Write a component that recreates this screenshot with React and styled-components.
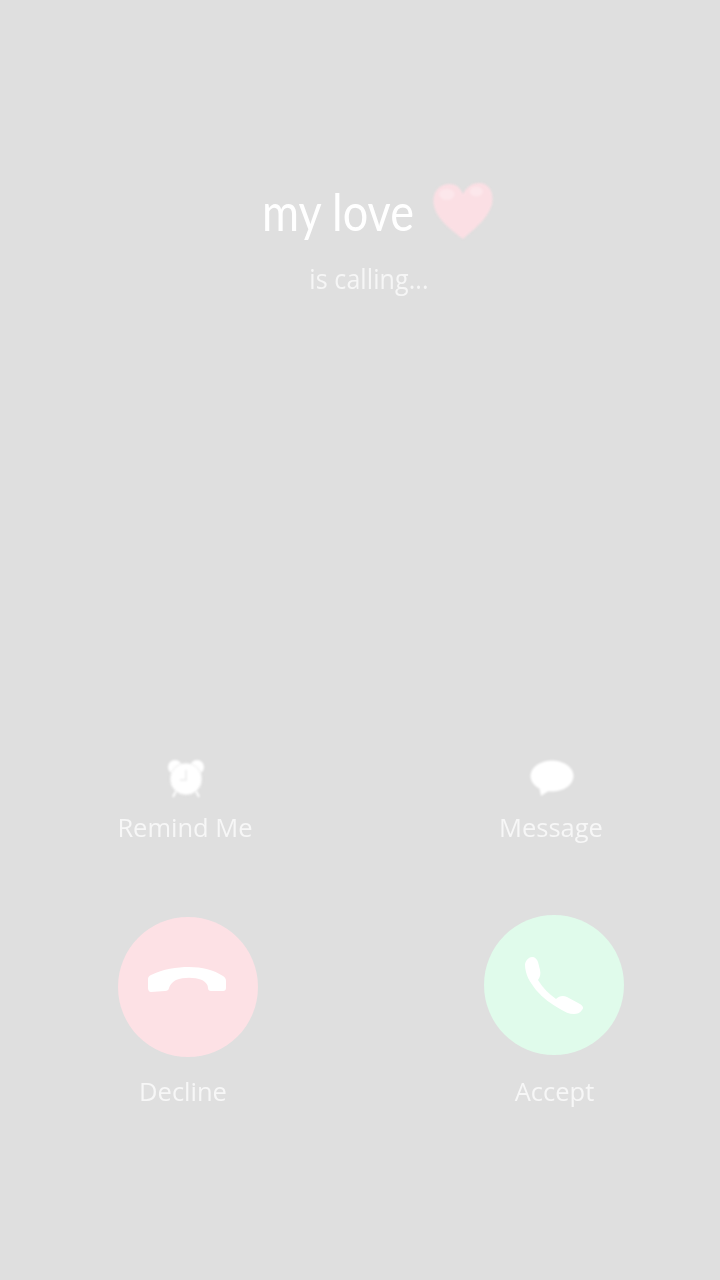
import React from "react";
import styled, { createGlobalStyle } from "styled-components";

const Global = createGlobalStyle`
  html, body { margin: 0; padding: 0; background: #dfdfdf; }
  body { font-family: "Open Sans", "Noto Sans", sans-serif; }
`;

const Screen = styled.main`
  box-sizing: border-box;
  width: 720px;
  height: 1280px;
  padding-top: 178px;
  background: #dfdfdf;
  overflow: hidden;
  display: flex;
  flex-direction: column;
`;

const Caller = styled.header`
  display: flex;
  flex-direction: column;
  align-items: center;
  height: 582px;
`;

const NameRow = styled.div`
  display: flex;
  align-items: flex-start;
  gap: 18px;
  height: 81px;
  margin-left: 36px;
`;

const Name = styled.h1`
  margin: 5px 0 0;
  font-family: "Lato", sans-serif;
  font-size: 45px;
  line-height: 56px;
  font-weight: 400;
  color: #ffffff;
  transform: scaleY(1.16);
  filter: blur(0.6px);
`;

const Heart = styled.svg`
  display: block;
  margin-top: 4px;
  filter: blur(1px);
`;

const Status = styled.p`
  margin: 0 0 0 18px;
  font-size: 25px;
  line-height: 38px;
  letter-spacing: 0.1px;
  color: rgba(255, 255, 255, 0.72);
  transform: scaleY(1.06);
  filter: blur(0.6px);
`;

const Row = styled.section`
  display: grid;
  grid-template-columns: 200px 200px;
  column-gap: 166px;
  padding-left: 86px;
`;

const Column = styled.div`
  display: flex;
  flex-direction: column;
  align-items: center;
`;

const Shortcut = styled(Column)`
  height: 155px;
`;

const ShortcutIcon = styled.svg`
  display: block;
  filter: blur(0.9px);
`;

const Label = styled.span`
  display: block;
  margin-left: ${(p) => p.$shift || 0}px;
  margin-top: ${(p) => p.$top || 0}px;
  font-size: 25.5px;
  line-height: 34px;
  color: rgba(255, 255, 255, 0.74);
  white-space: nowrap;
  filter: blur(0.6px);
`;

const CallButton = styled.button`
  display: flex;
  align-items: center;
  justify-content: center;
  box-sizing: border-box;
  width: 140px;
  height: 140px;
  padding: 0;
  margin-left: ${(p) => p.$shift}px;
  margin-top: ${(p) => p.$top}px;
  border: none;
  border-radius: 50%;
  background: ${(p) => p.$color};
  filter: blur(0.7px);
`;

const HangIcon = styled.svg`
  display: block;
`;

export default function App() {
  return (
    <Screen>
      <Global />
      <Caller>
        <NameRow>
          <Name>my love</Name>
          <Heart width="62" height="59" viewBox="0 0 64 62">
            <path
              d="M32 60C24 53 3 40 1 22C0 9 8 2 18 2C25 2 30 7 32 13C35 6 41 1 49 1C58 1 64 9 63 20C61 38 40 52 32 60Z"
              fill="#fbdfe4"
            />
            <ellipse cx="15" cy="13" rx="8" ry="6" fill="#fce7eb" />
            <ellipse cx="46" cy="10" rx="7" ry="5" fill="#fce7eb" />
          </Heart>
        </NameRow>
        <Status>is calling...</Status>
      </Caller>

      <Row>
        <Shortcut>
          <ShortcutIcon width="38" height="40" viewBox="0 0 38 40">
            <circle cx="8" cy="7" r="7" fill="#fff" />
            <circle cx="30" cy="7" r="7" fill="#fff" />
            <path d="M9 31L6 37M29 31L32 37" stroke="#fff" strokeWidth="2" />
            <circle cx="19" cy="19" r="16" fill="#fff" stroke="#e6e6e6" strokeWidth="0.8" />
            <path d="M19 10V20H13" fill="none" stroke="#ececec" strokeWidth="1.6" />
          </ShortcutIcon>
          <Label $top={10} $shift={-2}>Remind Me</Label>
        </Shortcut>
        <Shortcut>
          <ShortcutIcon width="44" height="38" viewBox="0 0 44 38">
            <ellipse cx="22" cy="16" rx="21.5" ry="15.5" fill="#fff" />
            <path d="M9 26L11 36L20 30Z" fill="#fff" />
          </ShortcutIcon>
          <Label $top={12} $shift={-2}>Message</Label>
        </Shortcut>
      </Row>

      <Row>
        <Column>
          <CallButton $color="#fde1e5" $shift={4} $top={2} aria-label="Decline">
            <HangIcon width="140" height="140" viewBox="0 0 140 140">
              <path
                d="M30 62C30 60 31 59 33 58C45 52 59 50 71 50C84 50 96 53 105 59C107 60 108 62 108 64L108 71C108 73 107 74 105 74L93 74C91 74 90 73 90 71C90 68 88 65 84 63C76 60 66 60 58 63C54 65 52 68 51 71C51 73 49 74 47 74L33 75C31 75 30 73 30 71Z"
                fill="#fff"
              />
            </HangIcon>
          </CallButton>
          <Label $top={17} $shift={-6}>Decline</Label>
        </Column>
        <Column>
          <CallButton $color="#e0fbeb" $shift={4} $top={0} aria-label="Accept">
            <HangIcon width="140" height="140" viewBox="0 0 140 140">
              <path
                d="M41 49C42 45 45 42 48 42C51 42 53 44 54 47L56 55C57 59 56 62 54 65C59 73 65 79 72 84C75 81 79 80 83 82L96 89C99 91 100 93 98 95C96 98 93 99 90 99C85 99 81 97 76 94C67 89 59 83 52 75C46 67 41 60 41 49Z"
                fill="#fff"
              />
            </HangIcon>
          </CallButton>
          <Label $top={19} $shift={5}>Accept</Label>
        </Column>
      </Row>
    </Screen>
  );
}
